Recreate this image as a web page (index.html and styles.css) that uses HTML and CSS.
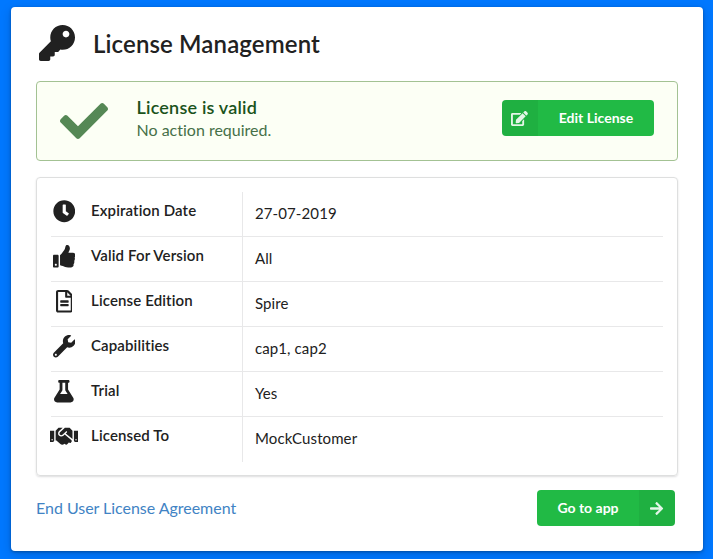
FILE: index.html
```html
<!DOCTYPE html>
<html lang="en">
<head>
<meta charset="utf-8">
<title>License Management</title>
<link rel="stylesheet" href="styles.css">
</head>
<body>
<main class="card">
  <header class="header">
    <svg class="key" viewBox="0 0 512 512"><path d="M512 176.001C512 273.203 433.202 352 336 352c-11.22 0-22.19-1.062-32.827-3.069l-24.012 27.014A23.999 23.999 0 0 1 261.223 384H224v40c0 13.255-10.745 24-24 24h-40v40c0 13.255-10.745 24-24 24H24c-13.255 0-24-10.745-24-24v-78.059c0-6.365 2.529-12.47 7.029-16.971l161.802-161.802C163.108 213.814 160 195.271 160 176 160 78.798 238.797.001 335.999 0 433.488-.001 512 78.511 512 176.001zM336 128c0 26.51 21.49 48 48 48s48-21.49 48-48-21.49-48-48-48-48 21.49-48 48z"/></svg>
    <h1>License Management</h1>
  </header>

  <section class="message">
    <svg class="check" viewBox="0 0 512 512"><path d="M173.898 439.404l-166.4-166.4c-9.997-9.997-9.997-26.206 0-36.204l36.203-36.204c9.997-9.998 26.207-9.998 36.204 0L192 312.69 432.095 72.596c9.997-9.997 26.207-9.997 36.204 0l36.203 36.204c9.997 9.997 9.997 26.206 0 36.204l-294.4 294.401c-9.998 9.997-26.207 9.997-36.204-.001z"/></svg>
    <div class="message-text">
      <h2>License is valid</h2>
      <p>No action required.</p>
    </div>
    <button class="button edit">
      <span class="button-icon"><svg viewBox="0 0 576 512"><path d="M402.6 83.2l90.2 90.2c3.8 3.8 3.8 10 0 13.8L274.4 405.6l-92.8 10.3c-12.4 1.4-22.9-9.1-21.5-21.5l10.3-92.8L388.8 83.2c3.8-3.8 10-3.8 13.8 0zm162-22.9l-48.8-48.8c-15.2-15.2-39.9-15.2-55.2 0l-35.4 35.4c-3.8 3.8-3.8 10 0 13.8l90.2 90.2c3.8 3.8 10 3.8 13.8 0l35.4-35.4c15.2-15.3 15.2-40 0-55.2zM384 346.2V448H64V128h229.8c3.2 0 6.2-1.3 8.5-3.5l40-40c7.6-7.6 2.2-20.5-8.5-20.5H48C21.5 64 0 85.5 0 112v352c0 26.5 21.5 48 48 48h352c26.5 0 48-21.5 48-48V306.2c0-10.7-12.9-16-20.5-8.5l-40 40c-2.2 2.3-3.5 5.3-3.5 8.5z"/></svg></span>
      <span class="button-label">Edit License</span>
    </button>
  </section>

  <section class="details">
    <div class="row">
      <div class="name"><span class="icon"><svg viewBox="0 0 512 512"><path d="M256 8C119 8 8 119 8 256s111 248 248 248 248-111 248-248S393 8 256 8zm57.1 350.1L224.9 294c-3.1-2.3-4.9-5.9-4.9-9.7V116c0-6.6 5.4-12 12-12h48c6.6 0 12 5.4 12 12v137.7l63.5 46.2c5.4 3.9 6.5 11.4 2.6 16.8l-28.2 38.8c-3.9 5.3-11.4 6.5-16.8 2.6z"/></svg></span>Expiration Date</div>
      <div class="value">27-07-2019</div>
    </div>
    <div class="row">
      <div class="name"><span class="icon"><svg viewBox="0 0 512 512"><path d="M104 224H24c-13.255 0-24 10.745-24 24v240c0 13.255 10.745 24 24 24h80c13.255 0 24-10.745 24-24V248c0-13.255-10.745-24-24-24zM64 472c-13.255 0-24-10.745-24-24s10.745-24 24-24 24 10.745 24 24-10.745 24-24 24zM384 81.452c0 42.416-25.97 66.208-33.277 94.548h101.723c33.397 0 59.397 27.746 59.553 58.098.084 17.938-7.546 37.249-19.439 49.197l-.11.11c9.836 23.337 8.237 56.037-9.308 79.469 8.681 25.895-.069 57.704-16.382 74.757 4.298 17.598 2.244 32.575-6.148 44.632C440.202 511.587 389.616 512 346.839 512l-2.845-.001c-48.287-.017-87.806-17.598-119.56-31.725-15.957-7.099-36.821-15.887-52.651-16.178-6.54-.12-11.783-5.457-11.783-11.998v-213.77c0-3.2 1.282-6.271 3.558-8.521 39.614-39.144 56.648-80.587 89.117-113.111 14.804-14.832 20.188-37.236 25.393-58.902C282.515 39.293 291.817 0 312 0c24 0 72 8 72 81.452z"/></svg></span>Valid For Version</div>
      <div class="value">All</div>
    </div>
    <div class="row">
      <div class="name"><span class="icon"><svg viewBox="0 0 384 512"><path d="M288 248v28c0 6.6-5.4 12-12 12H108c-6.6 0-12-5.4-12-12v-28c0-6.6 5.4-12 12-12h168c6.6 0 12 5.4 12 12zm-12 72H108c-6.6 0-12 5.4-12 12v28c0 6.6 5.4 12 12 12h168c6.6 0 12-5.4 12-12v-28c0-6.6-5.4-12-12-12zm108-188.1V464c0 26.5-21.5 48-48 48H48c-26.5 0-48-21.5-48-48V48C0 21.5 21.5 0 48 0h204.1C264.8 0 277 5.1 286 14.1L369.9 98c9 8.9 14.1 21.2 14.1 33.9zm-128-80V128h76.1L256 51.9zM336 464V176H232c-13.3 0-24-10.7-24-24V48H48v416h288z"/></svg></span>License Edition</div>
      <div class="value">Spire</div>
    </div>
    <div class="row">
      <div class="name"><span class="icon"><svg viewBox="0 0 512 512"><path d="M507.73 109.1c-2.24-9.03-13.54-12.09-20.12-5.51l-74.36 74.36-67.88-11.31-11.31-67.88 74.36-74.36c6.62-6.62 3.43-17.9-5.66-20.16-47.38-11.74-99.55.91-136.58 37.93-39.64 39.64-50.55 97.1-34.05 147.2L18.74 402.76c-24.99 24.99-24.99 65.51 0 90.5 24.99 24.99 65.51 24.99 90.5 0l213.21-213.21c50.12 16.71 107.47 5.68 147.37-34.22 37.07-37.07 49.7-89.32 37.91-136.73zM64 472c-13.25 0-24-10.75-24-24 0-13.26 10.75-24 24-24s24 10.74 24 24c0 13.25-10.75 24-24 24z"/></svg></span>Capabilities</div>
      <div class="value">cap1, cap2</div>
    </div>
    <div class="row">
      <div class="name"><span class="icon"><svg viewBox="0 0 448 512"><path d="M437.2 403.5L320 215V64h8c13.3 0 24-10.7 24-24V24c0-13.3-10.7-24-24-24H120c-13.3 0-24 10.7-24 24v16c0 13.3 10.7 24 24 24h8v151L10.8 403.5C-18.5 450.6 15.3 512 70.9 512h306.2c55.7 0 89.4-61.5 60.1-108.5zM137.9 320l48.2-77.6c3.7-5.2 5.8-11.6 5.8-18.4V64h64v160c0 6.9 2.2 13.2 5.8 18.4l48.2 77.6h-172z"/></svg></span>Trial</div>
      <div class="value">Yes</div>
    </div>
    <div class="row">
      <div class="name"><span class="icon"><svg viewBox="0 0 640 512"><path d="M434.7 64h-85.9c-8 0-15.7 3-21.6 8.4l-98.3 90c-.1.1-.2.3-.3.4-16.6 15.6-16.3 40.5-2.1 56 12.7 13.9 39.4 17.6 56.1 2.7.1-.1.3-.1.4-.2l79.9-73.2c6.5-5.9 16.7-5.5 22.6 1 6 6.5 5.5 16.6-1 22.6l-26.1 23.9L504 313.8c2.9 2.4 5.5 5 7.9 7.7V128l-54.6-54.6c-5.9-6-14.1-9.4-22.6-9.4zM544 128.2v223.9c0 17.7 14.3 32 32 32h64V128.2h-96zm48 223.9c-8.8 0-16-7.2-16-16s7.2-16 16-16 16 7.2 16 16-7.2 16-16 16zM0 384h64c17.7 0 32-14.3 32-32V128.2H0V384zm48-63.9c8.8 0 16 7.2 16 16s-7.2 16-16 16-16-7.2-16-16c0-8.9 7.2-16 16-16zm435.9 18.6L334.6 217.5l-30 27.5c-29.7 27.1-75.2 24.5-101.7-4.4-26.9-29.4-24.8-74.9 4.4-101.7L289.1 64h-83.8c-8.5 0-16.6 3.4-22.6 9.4L128 128v223.9h18.3l90.5 81.9c27.4 22.3 67.7 18.1 90-9.3l.2-.2 17.9 15.5c15.9 13 39.4 10.5 52.3-5.4l31.4-38.6 5.4 4.4c13.7 11.1 33.9 9.1 45-4.7l9.5-11.7c11.2-13.8 9.1-33.9-4.6-45.1z"/></svg></span>Licensed To</div>
      <div class="value">MockCustomer</div>
    </div>
  </section>

  <footer class="footer">
    <a href="#">End User License Agreement</a>
    <button class="button go">
      <span class="button-label">Go to app</span>
      <span class="button-icon"><svg viewBox="0 0 448 512"><path d="M190.5 66.9l22.2-22.2c9.4-9.4 24.6-9.4 33.9 0L441 239c9.4 9.4 9.4 24.6 0 33.9L246.6 467.3c-9.4 9.4-24.6 9.4-33.9 0l-22.2-22.2c-9.5-9.5-9.3-25 .4-34.3L311.4 296H24c-13.3 0-24-10.7-24-24v-32c0-13.3 10.7-24 24-24h287.4L190.9 101.2c-9.8-9.3-10-24.8-.4-34.3z"/></svg></span>
    </button>
  </footer>
</main>
</body>
</html>
```
FILE: styles.css
```css
* { box-sizing: border-box; }

body {
  margin: 0;
  height: 559px;
  padding: 7px 10px 8px 11px;
  overflow: hidden;
  background: #0078ff;
  font-family: Lato, sans-serif;
  font-variant-ligatures: none;
  color: #212121;
}

svg { display: block; fill: currentColor; }

h1, h2, p { margin: 0; }

.card {
  height: 544px;
  padding: 0 25px;
  background: #fff;
  border-radius: 4px;
  box-shadow: 0 1px 3px 0 rgba(0, 0, 0, .3), 0 3px 12px 0 rgba(0, 0, 0, .16);
}

.header {
  display: flex;
  align-items: center;
  height: 74px;
  padding-left: 3px;
}

.key { width: 36px; height: 36px; margin-top: -2px; }

h1 {
  margin-left: 18px;
  font-size: 24px;
  line-height: 30px;
  font-weight: 600;
  letter-spacing: .13px;
}

.message {
  display: flex;
  align-items: center;
  height: 80px;
  padding: 0 23px;
  background: #fcfff5;
  border: 1px solid #a3c293;
  border-radius: 4px;
}

.check { width: 48px; height: 48px; color: #558855; }

.message-text { flex: 1; margin-left: 28.5px; margin-top: -7px; color: #467048; }

h2 {
  font-size: 18px;
  line-height: 23px;
  font-weight: 600;
  letter-spacing: .2px;
  color: #1a531b;
}

p { font-size: 16px; line-height: 21px; }

.button {
  display: flex;
  height: 36px;
  padding: 0;
  border: 0;
  border-radius: 4px;
  overflow: hidden;
  background: #21ba45;
  color: #fff;
  font: 700 14px/36px Lato, sans-serif;
}

.edit { width: 152px; margin-top: -6px; }
.go { width: 138px; }

.button-label { flex: 1; text-align: center; }

.button-icon {
  display: flex;
  align-items: center;
  justify-content: center;
  width: 36px;
  height: 36px;
  background: rgba(0, 0, 0, .05);
}

.button-icon svg { height: 14px; opacity: .88; }
.edit svg { height: 15px; margin-right: 1px; }
.go svg { height: 15px; }

.details {
  height: 299px;
  margin-top: 16px;
  padding: 14px;
  border: 1px solid #dedfdf;
  border-radius: 4px;
  box-shadow: 0 1px 2px 0 rgba(34, 36, 38, .15);
}

.row {
  display: flex;
  height: 45px;
  border-bottom: 1px solid #e8e8e9;
}

.row:last-child { border-bottom-color: transparent; }

.name {
  display: flex;
  width: 192px;
  height: 45px;
  border-right: 1px solid #e8e8e9;
  font-size: 15px;
  line-height: 37px;
  font-weight: 600;
  letter-spacing: .13px;
}

.icon {
  display: flex;
  justify-content: center;
  width: 27px;
  margin: 8px 13.5px 0 -.5px;
}

.icon svg { height: 22.5px; flex: none; }

.value {
  padding-left: 12px;
  font-size: 15px;
  line-height: 43px;
  letter-spacing: .1px;
}

.footer {
  display: flex;
  justify-content: space-between;
  padding: 14px 3px 0 0;
}

.footer a {
  font-size: 16px;
  line-height: 36px;
  letter-spacing: -.03px;
  color: #4183c4;
  text-decoration: none;
}
```
